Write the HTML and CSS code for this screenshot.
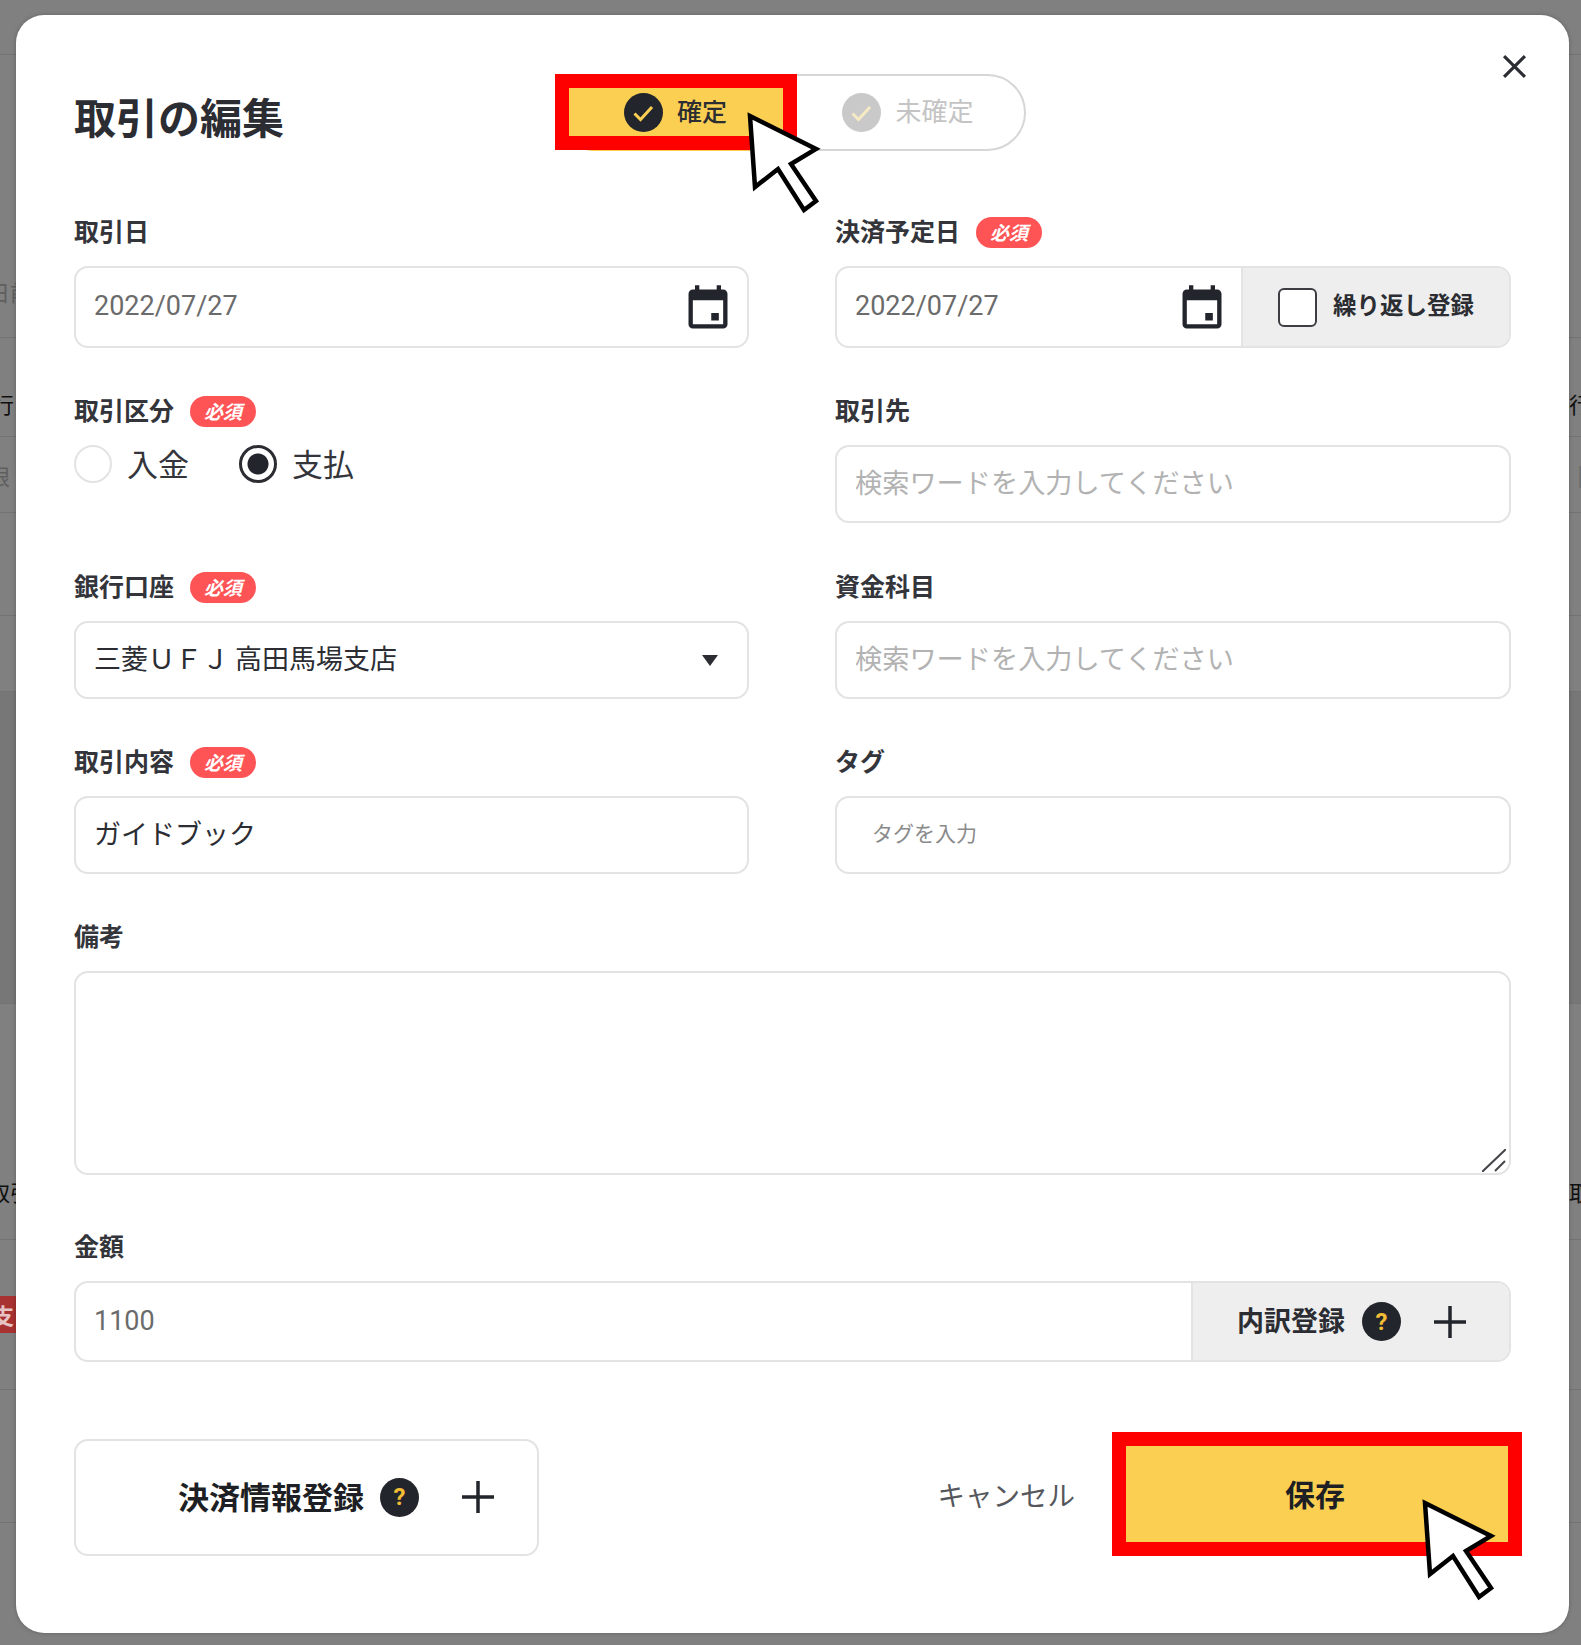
FILE: index.html
```html
<!DOCTYPE html>
<html lang="ja">
<head>
<meta charset="utf-8">
<title>取引の編集</title>
<link rel="stylesheet" href="styles.css">
</head>
<body>
<svg class="sprites" aria-hidden="true">
  <symbol id="cal" viewBox="0 0 24 24"><path d="M13.5 13.8h3.5v3.5h-3.5zM16 1v2H8V1H6v2H5c-1.11 0-1.99.9-1.99 2L3 19c0 1.1.89 2 2 2h14c1.1 0 2-.9 2-2V5c0-1.1-.9-2-2-2h-1V1h-2zm3 18H5V8h14v11z"/></symbol>
  <symbol id="plus" viewBox="0 0 32 32"><path d="M16 0v32M0 16h32"/></symbol>
  <symbol id="check" viewBox="0 0 39 39"><path d="M10.500 20.500l6 6L28 14"/></symbol>
  <symbol id="arrow" viewBox="-3 -3 80 110"><path d="M2 4L68 37L43 52L68 89L56 98L30 57L7 75Z"/></symbol>
</svg>

<div class="backdrop">
  <div class="bg-row r1"></div>
  <div class="bg-row r2 end"><span class="edge dim"><span class="shift-a">日前</span></span></div>
  <div class="bg-row r3 end"><span class="edge"><span class="shift-b">行</span></span><span class="edge-r">行</span></div>
  <div class="bg-row r4"><span class="edge dim"><span class="shift-a">限</span></span><span class="edge-r dim">｜三</span></div>
  <div class="bg-row r5"></div>
  <div class="bg-row r6"></div>
  <div class="bg-row r7 dark"></div>
  <div class="bg-row r8 end"><span class="edge"><span class="shift-a">取引</span></span><span class="edge-r">取引</span></div>
  <div class="bg-row r9"><span class="tag"><span class="shift-b">支</span></span></div>
  <div class="bg-row r10"></div>
  <div class="bg-row r11"></div>
</div>

<main class="modal">
  <header class="head">
    <h1 class="title">取引の編集</h1>
    <div class="pill">
      <div class="seg seg-on">
        <svg class="tick tick-on"><use href="#check"/></svg>
        <span class="seg-text">確定</span>
      </div>
      <div class="seg seg-off">
        <svg class="tick tick-off"><use href="#check"/></svg>
        <span class="seg-text">未確定</span>
      </div>
    </div>
  </header>

  <svg class="close" viewBox="0 0 24 24"><path d="M2 2l20 20M22 2L2 22"/></svg>

  <section class="row row-first">
    <div class="field">
      <div class="label">取引日</div>
      <div class="box h82 between">
        <span class="date">2022/07/27</span>
        <svg class="cal"><use href="#cal"/></svg>
      </div>
    </div>
    <div class="field">
      <div class="label">決済予定日<span class="req">必須</span></div>
      <div class="box h82 joined">
        <div class="joined-main between">
          <span class="date">2022/07/27</span>
          <svg class="cal cal-tight"><use href="#cal"/></svg>
        </div>
        <div class="side side-repeat">
          <span class="checkbox"></span>
          <span class="side-text">繰り返し登録</span>
        </div>
      </div>
    </div>
  </section>

  <section class="row row-tight">
    <div class="field">
      <div class="label">取引区分<span class="req">必須</span></div>
      <div class="radios">
        <span class="radio"></span><span class="radio-text">入金</span>
        <span class="radio radio-on"></span><span class="radio-text">支払</span>
      </div>
    </div>
    <div class="field">
      <div class="label">取引先</div>
      <div class="box h78"><span class="ph">検索ワードを入力してください</span></div>
    </div>
  </section>

  <section class="row">
    <div class="field">
      <div class="label">銀行口座<span class="req">必須</span></div>
      <div class="box h78 between">
        <span class="value">三菱ＵＦＪ 高田馬場支店</span>
        <span class="caret"></span>
      </div>
    </div>
    <div class="field">
      <div class="label">資金科目</div>
      <div class="box h78"><span class="ph">検索ワードを入力してください</span></div>
    </div>
  </section>

  <section class="row row-tight">
    <div class="field">
      <div class="label">取引内容<span class="req">必須</span></div>
      <div class="box h78"><span class="value">ガイドブック</span></div>
    </div>
    <div class="field">
      <div class="label">タグ</div>
      <div class="box h78"><span class="ph-small">タグを入力</span></div>
    </div>
  </section>

  <section class="row-single row-note">
    <div class="field">
      <div class="label">備考</div>
      <div class="box note">
        <svg class="grip" viewBox="0 0 24 23"><path d="M0 23L24 0M13 22L23 12"/></svg>
      </div>
    </div>
  </section>

  <section class="row-single row-amount">
    <div class="field">
      <div class="label">金額</div>
      <div class="box h81 joined">
        <div class="joined-main"><span class="date">1100</span></div>
        <div class="side side-split">
          <span class="split-text">内訳登録</span>
          <span class="help">?</span>
          <svg class="plus"><use href="#plus"/></svg>
        </div>
      </div>
    </div>
  </section>

  <footer class="foot">
    <div class="pay">
      <span class="pay-text">決済情報登録</span>
      <span class="help">?</span>
      <svg class="plus"><use href="#plus"/></svg>
    </div>
    <div class="actions">
      <span class="cancel">キャンセル</span>
      <div class="save">保存</div>
    </div>
  </footer>

  <div class="mark"></div>
  <svg class="cursor cursor-a"><use href="#arrow"/></svg>
  <svg class="cursor cursor-b"><use href="#arrow"/></svg>
</main>
</body>
</html>
```

FILE: styles.css
```css
* { box-sizing: border-box; }

html, body {
  margin: 0;
  height: 1645px;
  overflow: hidden;
}

body {
  position: relative;
  background: #808080;
  font-family: "Noto Sans CJK JP", "Noto Sans", sans-serif;
  color: #2b2d33;
}

.sprites { display: none; }

/* page behind the dialog */
.backdrop { display: flex; flex-direction: column; height: 1645px; }
.bg-row {
  display: flex;
  justify-content: space-between;
  align-items: center;
  flex: none;
  border-bottom: 1px solid #737373;
  font-size: 22px;
  line-height: 26px;
  color: #101010;
  overflow: hidden;
}
.bg-row.end { align-items: flex-end; padding-bottom: 20px; }
.r1 { height: 55px; }
.r2 { height: 283px; }
.r3 { height: 99px; }
.r4 { height: 76px; }
.r5 { height: 103px; }
.r6 { height: 76px; }
.r7 { height: 312px; }
.r8 { height: 236px; }
.r9 { height: 150px; }
.r10 { height: 133px; }
.r11 { flex: 1; border-bottom: 0; }
.dark { background: #777777; }
.r8.end { padding-bottom: 35px; }
.r2.end { padding-bottom: 33px; }
.edge { display: block; width: 16px; overflow: hidden; white-space: nowrap; }
.edge-r { display: block; width: 12px; overflow: hidden; white-space: nowrap; }
.dim { color: #5f5f5f; }
.shift-a { margin-left: -12px; }
.shift-b { margin-left: -8px; }
.tag {
  display: block;
  width: 16px;
  height: 37px;
  overflow: hidden;
  white-space: nowrap;
  background: #a83232;
  color: #e6c4c4;
  font-weight: 700;
  line-height: 37px;
}

/* dialog */
.modal {
  position: absolute;
  left: 16px;
  top: 15px;
  width: 1553px;
  height: 1618px;
  padding: 59px 58px 0 58px;
  background: #fff;
  border-radius: 28px;
  box-shadow: 0 0 4px rgba(0, 0, 0, .25);
}

.head { display: flex; align-items: flex-start; height: 77px; }
.title {
  width: 481px;
  margin: 16px 0 0;
  font-size: 42px;
  line-height: 52px;
  font-weight: 700;
  color: #2b2d33;
}
.pill {
  display: flex;
  width: 471px;
  height: 77px;
  border: 2px solid #d6d6d6;
  border-radius: 39px;
}
.seg {
  display: flex;
  align-items: center;
  justify-content: center;
  gap: 14px;
  font-size: 25px;
  font-weight: 500;
}
.seg-text { padding-bottom: 6px; }
.seg-on {
  width: 241px;
  margin: -2px 0 -2px -2px;
  background: #fbcf51;
  border-radius: 39px 0 0 39px;
}
.seg-off {
  flex: 1;
  padding-right: 4px;
  color: #c4c4c4;
  font-size: 26px;
  font-weight: 400;
}
.tick { width: 39px; height: 39px; border-radius: 50%; fill: none; stroke-width: 3; }
.tick-on { background: #23252d; stroke: #fbcf51; }
.tick-off { background: #c9c9c9; stroke: #f6eac4; }

.close {
  position: absolute;
  right: 42px;
  top: 39px;
  width: 25px;
  height: 25px;
  fill: none;
  stroke: #2b2d33;
  stroke-width: 3;
}

.row {
  display: grid;
  grid-template-columns: 675px 676px;
  column-gap: 86px;
  margin-top: 48px;
}
.row-first { margin-top: 65px; }
.row-tight { margin-top: 47px; }
.row-single { display: block; }
.row-note { margin-top: 47px; }
.row-amount { margin-top: 56px; }

.field { display: flex; flex-direction: column; gap: 18px; min-width: 0; }
.label {
  display: flex;
  align-items: center;
  height: 32px;
  padding-bottom: 4px;
  font-size: 25px;
  font-weight: 700;
  color: #33353b;
}
.req {
  display: flex;
  align-items: center;
  justify-content: center;
  width: 66px;
  height: 31px;
  margin: 4px 0 0 16px;
  padding-bottom: 2px;
  border-radius: 16px;
  background: #ff5456;
  color: #fff;
  font-size: 19px;
  font-weight: 700;
  font-style: italic;
}

.box {
  display: flex;
  align-items: center;
  padding: 0 18px;
  border: 2px solid #e3e3e3;
  border-radius: 14px;
  background: #fff;
  overflow: hidden;
}
.h82 { height: 82px; }
.h81 { height: 81px; }
.h78 { height: 78px; }
.between { justify-content: space-between; }

.date { padding-bottom: 2px; font-family: Roboto, "Liberation Sans", sans-serif; font-size: 27px; color: #6b6b6b; }
.value { padding-bottom: 6px; font-size: 27px; color: #2b2d33; white-space: pre; }
.ph { padding-bottom: 7px; font-size: 27.200px; color: #b2b2b2; }
.ph-small { padding-bottom: 7px; margin-left: 17px; font-size: 21px; color: #8a8a8a; }

.cal { width: 52px; height: 52px; margin: 3px -5px 0 0; fill: #23252d; flex: none; }
.cal-tight { margin-right: 13px; }

.joined { padding: 0; align-items: stretch; }
.joined-main { display: flex; align-items: center; flex: 1; padding-left: 18px; }
.side {
  display: flex;
  align-items: center;
  flex: none;
  background: #eeeeee;
  border-left: 2px solid #e3e3e3;
}
.side-repeat { width: 268px; padding-left: 35px; gap: 16px; }
.side-split { width: 318px; padding-left: 44px; }
.side-split .help { margin-left: 17px; }
.side-split .plus { margin-left: 33px; }
.checkbox {
  width: 39px;
  height: 39px;
  border: 2px solid #3c3e44;
  border-radius: 6px;
  background: #fff;
}
.side-text { padding-bottom: 6px; font-size: 23.500px; font-weight: 700; color: #2b2d33; }
.split-text { padding-bottom: 4px; font-size: 27px; font-weight: 700; color: #2b2d33; }

.radios { display: flex; align-items: center; height: 38px; }
.radio {
  flex: none;
  width: 38px;
  height: 38px;
  border: 2px solid #e3e3e3;
  border-radius: 50%;
}
.radio-on {
  margin-left: 50px;
  border: 3px solid #2b2d33;
  background: radial-gradient(circle, #23252d 0 10px, #fff 11px);
}
.radio-text { padding-bottom: 4px; margin-left: 15px; font-size: 31px; color: #33353b; }

.caret {
  width: 0;
  height: 0;
  margin-right: 11px;
  border-left: 8px solid transparent;
  border-right: 8px solid transparent;
  border-top: 11px solid #2b2d33;
}

.note { position: relative; height: 204px; }
.grip {
  position: absolute;
  right: 3px;
  bottom: 1px;
  width: 24px;
  height: 23px;
  fill: none;
  stroke: #44464c;
  stroke-width: 2;
}

.help {
  display: flex;
  align-items: center;
  justify-content: center;
  flex: none;
  width: 39px;
  height: 39px;
  border-radius: 50%;
  background: #23252d;
  color: #f2bd35;
  font-family: Roboto, "Liberation Sans", sans-serif;
  font-size: 24px;
  font-weight: 700;
}
.plus { flex: none; width: 32px; height: 32px; fill: none; stroke: #23252d; stroke-width: 3.500; }

.foot {
  display: flex;
  justify-content: space-between;
  align-items: center;
  height: 124px;
  margin: 70px -11px 0 0;
}
.pay {
  display: flex;
  align-items: center;
  width: 465px;
  height: 117px;
  margin-top: 6px;
  padding-left: 102px;
  border: 2px solid #e3e3e3;
  border-radius: 14px;
}
.pay-text { padding-bottom: 4px; font-size: 31px; font-weight: 700; color: #1d1f24; }
.pay .help { margin-left: 16px; }
.pay .plus { margin-left: 43px; }

.actions { display: flex; align-items: center; gap: 37px; }
.cancel { font-size: 27.500px; color: #55575c; }
.save {
  display: flex;
  align-items: center;
  justify-content: center;
  width: 410px;
  height: 124px;
  padding: 0 4px 2px 0;
  border: 14px solid #ff0000;
  background: #fbcf51;
  font-size: 30px;
  font-weight: 700;
  color: #1d1f24;
}

/* annotations drawn over the screenshot */
.mark {
  position: absolute;
  left: 539px;
  top: 59px;
  width: 242px;
  height: 76px;
  border: 14px solid #ff0000;
}
.cursor {
  position: absolute;
  width: 80px;
  height: 110px;
  fill: #fff;
  stroke: #000;
  stroke-width: 4.500;
  overflow: visible;
}
.cursor-a { left: 729px; top: 94px; }
.cursor-b { left: 1404px; top: 1481px; }
```
